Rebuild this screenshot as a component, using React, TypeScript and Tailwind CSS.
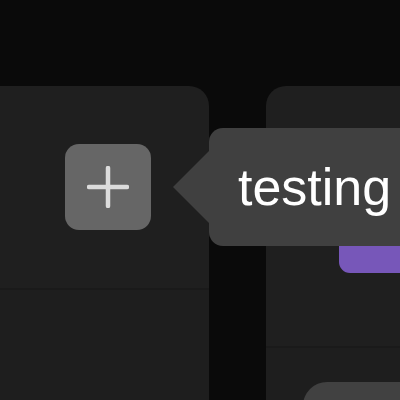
export default function App() {
  return (
    <div className="relative w-[400px] h-[400px] overflow-hidden bg-[#0a0a0a] font-['Liberation_Sans',Arial,sans-serif]">
      <div className="flex pt-[86px] h-full gap-[57px]">
        {/* left panel */}
        <div className="w-[209px] shrink-0 flex flex-col bg-[#1f1f1f] rounded-tr-[20px]">
          <div className="h-[202px] shrink-0 pt-[58px] pl-[65px]">
            <button className="w-[86px] h-[86px] rounded-[14px] bg-[#666666] flex items-center justify-center">
              <svg width="42" height="42" viewBox="0 0 42 42">
                <path d="M21 2v38M2 21h38" stroke="#dcdcdc" strokeWidth="4.5" strokeLinecap="round" />
              </svg>
            </button>
          </div>
          <div className="flex-1 border-t-2 border-[#1a1a1a] bg-[#1e1e1e]" />
        </div>

        {/* right panel */}
        <div className="flex-1 min-w-[200px] flex flex-col bg-[#1f1f1f] rounded-tl-[20px] overflow-hidden">
          <div className="h-[260px] shrink-0 pl-[73px] pt-[144px]">
            <div className="h-[43px] w-[200px] bg-[#7757b9] rounded-bl-[11px]" />
          </div>
          <div className="flex-1 border-t-2 border-[#1a1a1a] bg-[#1e1e1e] pl-[37px] pt-[34px]">
            <div className="h-[60px] w-[200px] bg-[#414141] rounded-tl-[24px]" />
          </div>
        </div>
      </div>

      {/* tooltip */}
      <div className="absolute left-[173px] top-[128px] flex items-center">
        <svg width="37" height="74" viewBox="0 0 37 74" className="block">
          <polygon points="0,37 37,0 37,74" fill="#404040" />
        </svg>
        <div className="h-[118px] w-[260px] -ml-px rounded-[14px] bg-[#404040] flex items-center pl-[29px]">
          <span className="text-[52px] leading-none text-white">testing</span>
        </div>
      </div>
    </div>
  );
}
